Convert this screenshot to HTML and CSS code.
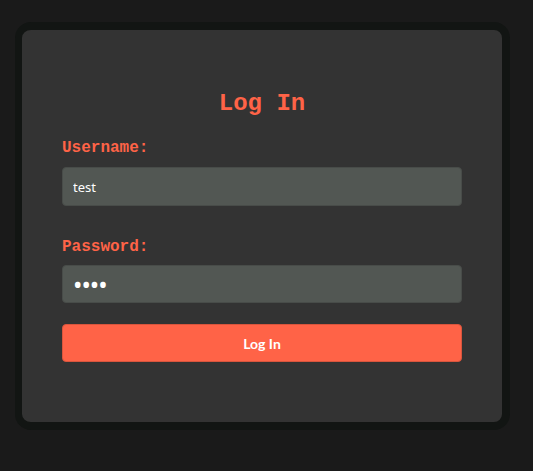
FILE: index.html
```html
<!DOCTYPE html>
<html lang="en">
<head>
<meta charset="utf-8">
<title>Log In</title>
<link rel="stylesheet" href="styles.css">
</head>
<body>
<main class="card">
  <h2 class="title">Log In</h2>
  <form class="form">
    <label class="label" for="username">Username:</label>
    <input class="field" id="username" type="text" value="test">
    <label class="label label-gap" for="password">Password:</label>
    <input class="field field-pass" id="password" type="password" value="test">
    <button class="btn" type="button">Log In</button>
  </form>
</main>
</body>
</html>
```
FILE: styles.css
```css
html, body {
  margin: 0;
  padding: 0;
  background: #1a1a1a;
  height: 100%;
}
body {
  padding: 22px 0 0 15px;
  box-sizing: border-box;
}
.card {
  width: 495px;
  height: 408px;
  box-sizing: border-box;
  background: #333333;
  border: 8px solid #121513;
  border-left-width: 7px;
  border-radius: 16px;
  padding: 40px;
}
.title {
  margin: 20px 0 20px;
  text-align: center;
  font-family: "Liberation Mono", monospace;
  font-weight: bold;
  font-size: 24px;
  line-height: 27px;
  color: #ff6347;
}
.form {
  display: flex;
  flex-direction: column;
}
.label {
  font-family: "Liberation Mono", monospace;
  font-weight: bold;
  font-size: 16px;
  line-height: 18px;
  color: #ff6347;
  margin-top: 2px;
  margin-bottom: 10px;
}
.label-gap {
  margin-top: 32px;
  margin-bottom: 9px;
}
.field {
  height: 39px;
  box-sizing: border-box;
  background: #525753;
  border: 1px solid #484c49;
  border-radius: 4px;
  padding: 0 10px;
  color: #ffffff;
  font-family: "Noto Sans", sans-serif;
  font-size: 13px;
  outline: none;
}
.field-pass {
  height: 38px;
  font-size: 25px;
  letter-spacing: -1px;
}
.btn {
  margin-top: 21px;
  height: 38px;
  background: #ff6347;
  border: 1px solid #d9553d;
  border-radius: 4px;
  color: #ffffff;
  font-family: "Lato", sans-serif;
  font-weight: bold;
  font-size: 14px;
}
```
